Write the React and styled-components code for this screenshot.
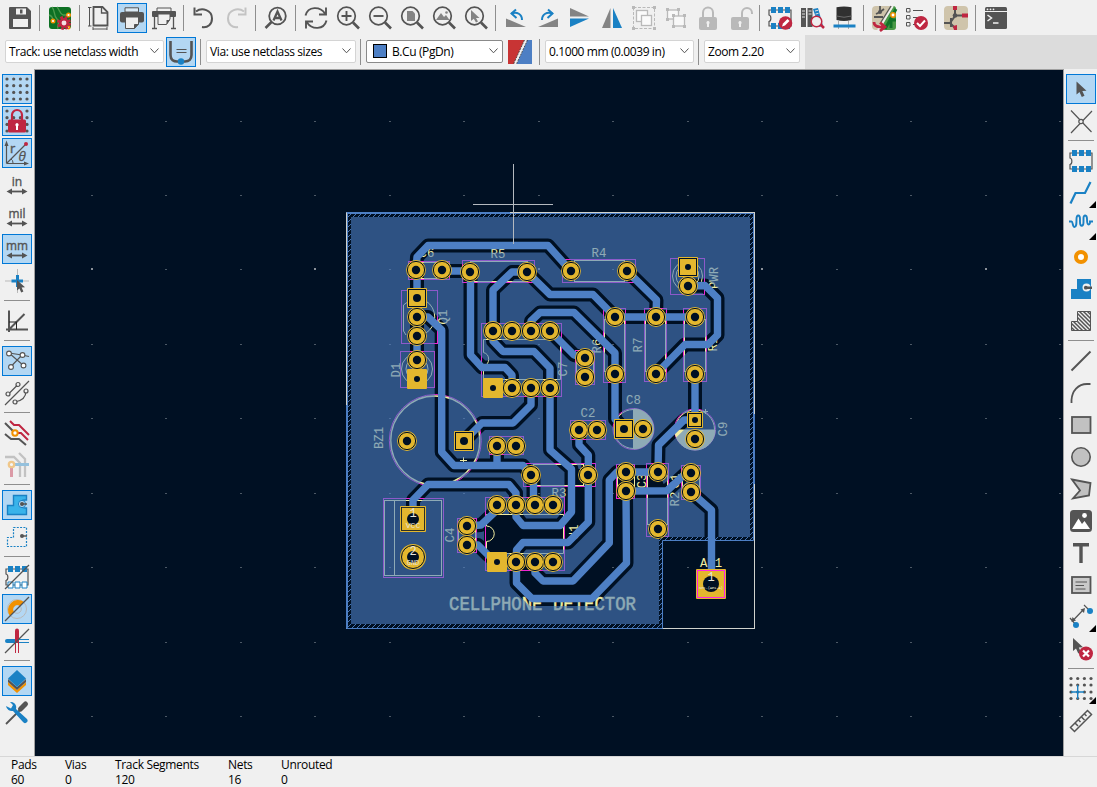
import React from "react";
import styled, { createGlobalStyle, css } from "styled-components";

const D = "#545454";
const B = "#1a81c4";
const R = "#bf2641";
const G = "#848484";
const L = "#b9b9b9";
const O = "#f29100";

const GlobalStyle = createGlobalStyle`
  * { box-sizing: border-box; }
  body { margin: 0; background: #f0f0f0; overflow: hidden; }
`;

const Window = styled.div`
  width: 1097px;
  height: 787px;
  display: flex;
  flex-direction: column;
  background: #f0f0f0;
  color: #000;
  font: 12px/15px "Open Sans", "Noto Sans", sans-serif;
`;

const TopToolbar = styled.div`
  height: 35px;
  flex: none;
  display: flex;
  gap: 2px;
  padding: 3px 0 0 5px;
`;

const OptionsRow = styled.div`
  height: 34px;
  flex: none;
  display: flex;
  background: #dcdcdc;
`;

const OptionsBar = styled.div`
  width: 805px;
  display: flex;
  align-items: flex-start;
  background: #f0f0f0;
  padding: 2px 0 0 5px;
`;

const Middle = styled.div`
  flex: 1;
  min-height: 0;
  display: flex;
`;

const SideToolbar = styled.div`
  width: ${(p) => (p.$right ? 33 : 34)}px;
  flex: none;
  display: flex;
  flex-direction: column;
  gap: 2px;
  padding: 5px 0 0 2px;
`;

const CanvasFrame = styled.div`
  flex: 1;
  border: 1px solid #a0a0a0;
  border-bottom: 0;
  background: #001023;
`;

const Separator = styled.i`
  flex: none;
  background: #8e8e8e;
  ${(p) =>
    p.$horizontal
      ? css`width: 26px; height: 1px; margin: 2px 0 3px 2px;`
      : css`width: 1px; height: 26px; margin: 2px 3px 0 2px;`}
`;

const OptionSeparator = styled.i`
  width: 1px;
  height: 26px;
  background: #8e8e8e;
  margin: 2px ${(p) => p.$after ?? 5}px 0 ${(p) => p.$before ?? 4}px;
`;

const Button = styled.button`
  position: relative;
  width: 30px;
  height: 30px;
  flex: none;
  margin-left: ${(p) => p.$indent ?? 0}px;
  padding: 0;
  display: flex;
  align-items: center;
  justify-content: center;
  border: 1px solid ${(p) => (p.$active ? "#0078d7" : "transparent")};
  background: ${(p) => (p.$active ? "#b3d7f3" : "transparent")};
  svg { width: 24px; height: 24px; overflow: visible; }
`;

const Corner = styled.span`
  position: absolute;
  right: -1px;
  bottom: -1px;
  border-style: solid;
  border-width: 0 0 7px 7px;
  border-color: transparent transparent #000;
`;

const Combo = styled.div`
  width: ${(p) => p.$w}px;
  height: 23px;
  margin-top: 3px;
  padding: 0 4px 1px 3px;
  display: flex;
  align-items: center;
  gap: 5px;
  background: #fff;
  border: 1px solid ${(p) => (p.$strong ? "#8a8a8a" : "#d4d4d4")};
  border-radius: 2px;
  letter-spacing: -0.4px;
  white-space: nowrap;
  svg { width: 9px; height: 6px; margin-left: auto; flex: none; }
`;

const LayerSwatch = styled.i`
  width: 14px;
  height: 14px;
  margin: 0 0 0 3px;
  flex: none;
  background: #4d7fc4;
  border: 1px solid #000;
`;

const LayerPair = styled.svg`
  width: 24px;
  height: 24px;
  margin: 3px 0 0 5px;
`;

const StatusBar = styled.div`
  height: 31px;
  flex: none;
  display: flex;
  border-top: 1px solid #d7d7d7;
  padding: 0 0 0 11px;
  letter-spacing: -0.32px;
`;

const Stat = styled.div`
  width: ${(p) => p.$w}px;
  line-height: 15px;
  white-space: nowrap;
`;

const lens = (
  <>
    <circle cx="10.5" cy="10" r="8.8" fill="none" stroke={D} strokeWidth="1.7" />
    <path d="M17 16.5 23 22.5" stroke={D} strokeWidth="2.6" />
  </>
);
const chip = (top = B, bottom = B) => (
  <>
    <path d="M1 4H23V20H1V15.5C3.5 15 3.5 9.5 1 9Z" fill="none" stroke={D} strokeWidth="1.2" />
    <path d="M3 1h5v6H3zM10 1h5v6h-5zM17 1h5v6h-5z" fill={top} />
    <path d="M3 17h5v6H3zM10 17h5v6h-5zM17 17h5v6h-5z" fill={bottom} stroke={bottom === B ? "none" : B} strokeWidth="1" />
  </>
);
const gridDots = (xs, ys, r = 1.6) =>
  xs.flatMap((x) => ys.map((y) => <circle key={`${x}-${y}`} cx={x} cy={y} r={r} fill={D} />));
const unitArrow = (
  <>
    <path d="M4 18.5H20" stroke={D} strokeWidth="1.8" />
    <path d="M1.500 18.500 7 15.500V21.500ZM22.500 18.500 17 15.500V21.500Z" fill={D} />
  </>
);
const unit = (label, w) => (
  <>
    <text x="12" y="13" textAnchor="middle" fontFamily="Open Sans" fontSize="13.500" fill={D} stroke={D} strokeWidth=".4" textLength={w} lengthAdjust="spacingAndGlyphs">{label}</text>
    {unitArrow}
  </>
);
const padlock = (open) => (
  <>
    <rect x="3" y="11" width="18" height="13" rx="2" fill={L} />
    <path d={open ? "M14 12V7a5 5 0 0 1 10 0v1" : "M7 12V6.500a5 5 0 0 1 10 0V12"} fill="none" stroke={L} strokeWidth="2" />
    <path d="M12 15a1.700 1.700 0 0 1 1 3v3h-2v-3a1.700 1.700 0 0 1 1-3" fill="#f0f0f0" />
  </>
);
const cursor = <path d="M0 0V13L3 10.500 5.300 15.500 8 14.300 5.800 9.500 10 9.200Z" fill={D} />;

const icons = {
  save: (
    <>
      <path d="M2 1H19L23 5V22a1 1 0 0 1-1 1H2a1 1 0 0 1-1-1V2a1 1 0 0 1 1-1" fill={D} />
      <path d="M8 2.500H18V8.500H8ZM5 13H20V21H5Z" fill="#f0f0f0" />
      <path d="M12 3.500h2.500v4H12z" fill={D} />
    </>
  ),
  setup: (
    <>
      <rect x="1" y="1" width="22" height="22" rx="3" fill="#0d7024" />
      <path d="M4 1C8 6 5 9 9 13S8 20 10 23M9 1c3 3 2 6 6 8h8M1 9c5 1 3 6 6 8" fill="none" stroke="#4c9a4d" strokeWidth="1.300" />
      <g fill="#fff" stroke={O} strokeWidth="1.400"><circle cx="5" cy="15" r="1.800" /><circle cx="20.500" cy="9" r="1.800" /><circle cx="20.500" cy="21.500" r="1.300" /></g>
      <circle cx="16" cy="17" r="5.600" fill="none" stroke={R} strokeWidth="2.800" strokeDasharray="2.700 1.700" />
      <circle cx="16" cy="17" r="3.700" fill="#f4dfe3" stroke={R} strokeWidth="2.500" />
    </>
  ),
  page: (
    <g fill="none" stroke={D}>
      <path d="M5.500 1H14.500L19.500 6V19.500H5.500Z" strokeWidth="1.800" />
      <path d="M13.500 1V7H19.500" strokeWidth="1.300" />
      <path d="M0 1.500H3.500M1.500 1.500V20M0 20H3.500M5 23H19M5 21V24M19 21V24" strokeWidth="1" />
    </g>
  ),
  print: (
    <>
      <path d="M5 1.800H18.500V6H5Z" fill="#dbeaf5" stroke={D} />
      <rect x="0" y="6" width="24" height="10.500" rx="2" fill={D} />
      <path d="M5.500 11H18.500V18L14.500 22.500H5.500Z" fill="#eee" stroke={D} />
      <path d="M14.500 22.500V18.500H18.500" fill={D} stroke={D} />
    </>
  ),
  plot: (
    <>
      <path d="M5 2H19V6H5Z" fill="#f0f0f0" stroke={D} />
      <rect y="5" width="24" height="6" rx="1" fill={D} />
      <path d="M6 8H18V13L14.500 18.500H6Z" fill="#f0f0f0" stroke={D} />
      <path d="M14.500 18.500V14H18" fill={D} />
      <path d="M2.500 11V22M21.500 11V22M0 22.500H5M19 22.500H24" stroke={D} strokeWidth="1.300" />
    </>
  ),
  undo: (
    <g fill="none" stroke={D} strokeWidth="2">
      <path d="M4 5.500C10 1 20 4 20 12.500 20 18 16 22 10 21" /><path d="M2.500 1.500V8.500H10" />
    </g>
  ),
  redo: (
    <g fill="none" stroke="#c3c3c3" strokeWidth="2">
      <path d="M20 5.500C14 1 4 4 4 12.500 4 18 8 22 14 21" /><path d="M21.500 1.500V8.500H14" />
    </g>
  ),
  find: (
    <>
      <circle cx="13.500" cy="10" r="8.300" fill="none" stroke={D} strokeWidth="1.800" />
      <path d="M7.500 16 1.500 22" stroke={D} strokeWidth="2.500" />
      <path d="M9.500 14.500 13.500 5.500 17.500 14.500M11 12H16" fill="none" stroke={D} strokeWidth="2.300" />
    </>
  ),
  refresh: (
    <g fill="none" stroke={D} strokeWidth="1.900">
      <path d="M1.500 9.500C4 0 16 0 21 7.500M22 1.500V8.500H15" />
      <path d="M22.500 14.500C20 24 8 24 3 16.500M2 22.500V15.500H9" />
    </g>
  ),
  zoomIn: <>{lens}<path d="M10.500 5V15M5.500 10H15.500" stroke={D} strokeWidth="1.900" /></>,
  zoomOut: <>{lens}<path d="M5.500 10H15.500" stroke={D} strokeWidth="1.900" /></>,
  zoomPage: <>{lens}<path d="M7 5H12.500L15 7.500V15H7Z" fill={G} /></>,
  zoomObjects: <>{lens}<path d="M4 14 9 7l3 4 2-2 3.500 5Z" fill={G} /><circle cx="14.500" cy="6.500" r="1.300" fill={G} /></>,
  zoomSelection: <>{lens}<path d="M7 4V15L9.800 12.800 12 16.500 14 15.500 12 12H15.500Z" fill={G} /></>,
  rotateCcw: (
    <>
      <path d="M2 12.500V21H22Z" fill={G} />
      <path d="M7.500 7.500C13 5.500 18 8 18 14" fill="none" stroke={B} strokeWidth="2" /><path d="M12 3.500 7.500 7.500 12.500 12" fill="none" stroke={B} strokeWidth="2" />
    </>
  ),
  rotateCw: (
    <>
      <path d="M22 12.500V21H2Z" fill={G} />
      <path d="M16.500 7.500C11 5.500 6 8 6 14" fill="none" stroke={B} strokeWidth="2" /><path d="M12 3.500 16.500 7.500 11.500 12" fill="none" stroke={B} strokeWidth="2" />
    </>
  ),
  flipV: <><path d="M2 2V10.500H21Z" fill={G} /><path d="M2 21V12.500H21Z" fill={B} /></>,
  mirror: <><path d="M10.500 2V22H2Z" fill={G} /><path d="M13 2V22H22Z" fill={B} /></>,
  group: (
    <g fill="none" stroke={L}>
      <rect x="1.500" y="1.500" width="21" height="21" strokeDasharray="3 1.500" />
      <rect x="4.500" y="4.500" width="11" height="11" fill="#fafafa" strokeWidth="1.300" /><rect x="9.500" y="9.500" width="10" height="10" fill="#fafafa" strokeWidth="1.300" />
      <path d="M0 0h3v3H0zM21 0h3v3h-3zM0 21h3v3H0zM21 21h3v3h-3z" fill={L} stroke="none" />
    </g>
  ),
  ungroup: (
    <g fill="#f8f8f8" stroke={L} strokeWidth="1.300">
      <rect x="3.500" y="4" width="11" height="9" /><rect x="9.500" y="10" width="11" height="10" />
      <path d="M2 2h3v3H2zM13 2h3v3h-3zM2 12h3v3H2zM8 8h3v3H8zM19 8h3v3h-3zM8 19h3v3H8zM19 19h3v3h-3z" fill={L} stroke="none" />
    </g>
  ),
  lock: padlock(false),
  unlock: padlock(true),
  footprintEdit: <>{chip()}<circle cx="17.500" cy="17" r="6.800" fill={R} /><path d="m14 20.500 1-3 4.500-4.500 2 2L17 19.500Z" fill="#fff" /></>,
  library: (
    <>
      <path d="M1 2h5v19H1zM7.500 2h5v19h-5z" fill={D} /><path d="m13 3 5-1 5 18-4 1Z" fill={B} />
      <path d="M2 5h3M2 8h3M2 11h3M8.500 5h3M8.500 8h3M15 5l3-.700M15.500 8l3-.700" stroke="#ddd" />
      <path d="m20 18 4 4" stroke={R} strokeWidth="2.500" /><circle cx="16.500" cy="15.500" r="5.300" fill="#eee" stroke={R} strokeWidth="1.500" />
    </>
  ),
  capacitor: (
    <>
      <path d="M6.500 15V23M16.500 15V23" stroke="#aaa" /><path d="M4.500 1.300Q12-.5 19.500 1.300V14Q12 16 4.500 14Z" fill="#303030" /><path d="M4.500 10Q12 12.500 19.500 10" fill="none" stroke="#6a6a6a" />
      <rect x="1.500" y="18.500" width="22" height="3" fill={B} />
    </>
  ),
  updatePcb: (
    <>
      <rect width="24" height="24" rx="4" fill="#cfc4ab" /><path d="M21 0a3 3 0 0 1 3 3V21a3 3 0 0 1-3 3H8Z" fill="#4a9a47" />
      <path d="M24 3 13 23M24 14H19V22" fill="none" stroke="#117328" strokeWidth="3" />
      <path d="M8 0V6L4 8M8 6l4-3M2 11H11" stroke={D} strokeWidth="1.800" fill="none" /><circle cx="8" cy="6" r="2" fill={D} />
      <path d="M21 0 6 24" stroke="#eee" strokeWidth="1.700" /><path d="M19 0 9 16" stroke={D} strokeWidth="1.200" />
      <circle cx="21" cy="9" r="2.200" fill="#fff" stroke={O} strokeWidth="1.500" />
      <path d="M2 16c0 5 5 5 9 5M8 16.500l5 4.500-5 4" fill="none" stroke={R} strokeWidth="2.700" />
    </>
  ),
  drc: (
    <>
      <g fill="none" stroke={D}><path d="M2.500 2.500h3.500v3.500H2.500zM2.500 9.500h3.500V13H2.500zM2.500 16.500h3.500V20H2.500z" /><path d="M9 4.500H19M9 11.500H14M9 18.500H12" strokeWidth="1.200" /></g>
      <circle cx="17" cy="17" r="7" fill={R} /><path d="m13 17 3 3 5-5.500" fill="none" stroke="#fff" strokeWidth="2" />
    </>
  ),
  schematic: (
    <>
      <rect width="24" height="24" rx="4" fill="#cfc4ab" /><path d="M0 17H6L11 10V3M11 9.500H19M6 17 11 22" fill="none" stroke={D} strokeWidth="2" />
      <circle cx="11" cy="9.500" r="2.300" fill={D} /><path d="M9 0h4v4H9zM18 7.500h6v4h-6zM9 20l4-1v5H10z" fill={R} /><path d="M7 12V21" stroke={D} strokeWidth="2" />
    </>
  ),
  console: (
    <>
      <rect x="1" y="1" width="22" height="22" rx="1.500" fill={D} /><path d="M1 5.500H23" stroke="#f0f0f0" />
      <g fill="#f0f0f0"><circle cx="3.500" cy="3.300" r=".9" /><circle cx="6.500" cy="3.300" r=".9" /><circle cx="9.500" cy="3.300" r=".9" /></g>
      <path d="m3.500 9 4 3-4 3M9 17H14.500" fill="none" stroke="#f0f0f0" strokeWidth="1.500" />
    </>
  ),
  trackWidth: (
    <>
      <path d="M1.500 1V15C1.500 20 5 21.500 8 21.500H16C20 21.500 22.500 19 22.500 15V1" fill="none" stroke={D} strokeWidth="2.600" />
      <path d="M7.500 9.500H17.500M7.500 12.500H17.500" stroke={D} strokeWidth="1.200" /><circle cx="12" cy="21.500" r="3.200" fill={B} />
    </>
  ),
  grid: gridDots([2, 8.700, 15.400, 22], [2, 8.700, 15.400, 22]),
  gridLock: (
    <>
      {gridDots([2, 22], [2, 8.700, 15.400, 22])}
      {gridDots([8.700, 15.400], [8.700])}
      <path d="M7 11V6a5 5 0 0 1 10 0V11" fill="none" stroke={R} strokeWidth="2.200" /><rect x="3" y="10.500" width="18" height="13" rx="1.500" fill={R} />
      <path d="M12 14a1.900 1.900 0 0 1 1 3.300V21H11V17.300A1.900 1.900 0 0 1 12 14" fill="#fff" />
    </>
  ),
  polar: (
    <>
      <path d="M1.500 22.500V3M1.500 22.500H21M1.500 22.500 20 4" fill="none" stroke={D} strokeWidth="1.200" /><path d="M1.500-.5 3.500 5h-4ZM24 22.500 19 20.500v4Z" fill={D} />
      <path d="M6 18q2 1 2 4" fill="none" stroke={D} /><circle cx="21" cy="3" r="2" fill={R} />
      <text x="5" y="11.500" fontSize="13" fontFamily="Open Sans" fill={D} stroke={D} strokeWidth=".4">r</text><text x="13.500" y="19.500" fontSize="13.500" fontStyle="italic" fontFamily="Open Sans" fill={D} stroke={D} strokeWidth=".3">θ</text>
    </>
  ),
  inch: unit("in", 10.5),
  mil: unit("mil", 17),
  mm: unit("mm", 22),
  cursorShape: (
    <>
      <path d="M12.500 0V24M0 12H24" stroke={L} /><path d="M12.500 6V18M6.500 12H18" stroke={B} strokeWidth="3" />
      <g transform="translate(12 11) scale(.8)">{cursor}</g>
    </>
  ),
  angle: <g fill="none" stroke={D}><path d="M4 1.500V23M1 20.500H23M4 20.500 19.500 5" strokeWidth="2" /><path d="M4 13H11.500V20.500" stroke="#222" /></g>,
  ratsnest: (
    <g fill="#fff" stroke={D} strokeWidth="1.100">
      <path d="M4 4 18.500 16.500M4 4 17 6 24 7.500M17 6 5.500 18" fill="none" /><circle cx="4" cy="4.500" r="2.400" /><circle cx="17.500" cy="6" r="2.400" /><circle cx="18.500" cy="16.500" r="2.400" /><circle cx="6" cy="18" r="2.400" />
    </g>
  ),
  curvedRatsnest: (
    <g fill="#f0f0f0" stroke={D} strokeWidth="1.200">
      <path d="M0 24 24 0M3.500 13 13 3.500M10 21Q21 19 21 10" fill="none" /><circle cx="3" cy="13" r="2" /><circle cx="13" cy="3.500" r="2" /><circle cx="10" cy="21" r="2" /><circle cx="21" cy="10" r="2" />
    </g>
  ),
  highlight: (
    <g fill="none" strokeWidth="2">
      <path d="M5 0 9 4H14L24 14M12 12H16L23 19" stroke={R} />
      <path d="M0 2 8 10M0 13 6 18H14L21 24" stroke={D} /><circle cx="10" cy="12" r="2.700" fill="#fff" stroke={O} />
    </g>
  ),
  localRatsnest: (
    <g fill="none" strokeWidth="2.300" opacity=".42">
      <path d="M0 4H9L15 10V24M14 0 20 6V24" stroke={G} /><path d="M9 11.500H24" stroke={B} strokeWidth="3" /><path d="M6.500 14V24" stroke={R} strokeWidth="3" /><circle cx="6.500" cy="11.500" r="2.700" fill="#fff" stroke={O} />
    </g>
  ),
  zoneFill: (
    <>
      <path d="M8.500 2.500H21.500V7C12 6 12 16 21.500 15V21.500H2.500V12.500H8.500Z" fill="#39b3ea" stroke={B} strokeWidth="1.400" />
      <circle cx="17" cy="11" r="3.600" fill="#b3d7f3" stroke={B} /><circle cx="17" cy="11" r="2" fill={D} /><path d="M17 11H22" stroke={D} strokeWidth="1.500" />
    </>
  ),
  zoneOutline: (
    <>
      <path d="M8.500 2.500H21.500V21.500H2.500V12.500H8.500Z" fill="none" stroke={B} strokeWidth="1.200" strokeDasharray="2 1.300" /><circle cx="17" cy="11" r="2" fill={D} /><path d="M17 11H22" stroke={D} strokeWidth="1.500" />
    </>
  ),
  padOutline: <>{chip(B, "#fff")}<path d="M0 24 24 0" stroke={D} strokeWidth="1.200" /></>,
  viaOutline: (
    <>
      <circle cx="12" cy="12" r="9.500" fill="none" stroke={L} /><circle cx="12" cy="12" r="4.300" fill="none" stroke={L} />
      <path d="M5 19A10 10 0 0 1 19 5L15 9A4.300 4.300 0 0 0 9 15Z" fill={O} /><path d="M0 24 24 0" stroke={D} strokeWidth="1.200" />
    </>
  ),
  trackOutline: (
    <>
      <path d="M2 12H12" stroke={B} strokeWidth="4" strokeLinecap="round" /><path d="M12 10.500H24M12 13.500H24" stroke={B} /><path d="M12 1.500V12" stroke={R} strokeWidth="4" strokeLinecap="round" /><path d="M10.500 12V24M13.500 12V24" stroke={R} />
      <path d="M0 24 24 0" stroke={D} strokeWidth="1.200" />
    </>
  ),
  layers: (
    <>
      <path d="m3 13 9 8 9-8v3l-9 8-9-8Z" fill={O} /><path d="m3 10 9 8 9-8v3l-9 8-9-8Z" fill={D} /><path d="m12 1 9 8.500-9 8.500-9-8.500Z" fill={B} />
    </>
  ),
  tools: (
    <>
      <path d="m1 23 14-14" stroke={D} strokeWidth="1.800" /><path d="m15.500 8 5-5" stroke={D} strokeWidth="5" strokeLinecap="round" />
      <path d="M1 5A6 6 0 0 0 8 10L18 21a2.500 2.500 0 0 0 4-3L11 8A5.500 5.500 0 0 0 5 1L8 4 6 7.500Z" fill={B} />
    </>
  ),
  select: <g transform="translate(7.500 4.500)">{cursor}</g>,
  netTool: <g fill="#f0f0f0" stroke={D} strokeWidth="1.200"><path d="M2 1.500 22.500 23M23 2 2 24" /><circle cx="12" cy="12.500" r="2.200" /></g>,
  footprint: chip(),
  route: <path d="M1.500 22.500 6.500 12H16L21.500 1" fill="none" stroke={B} strokeWidth="2.200" />,
  tune: <path d="M0 8.500H2.500C4 8.500 3.500 14 5.500 14S7.500 11 7.500 6 11 1.500 11 6V9C11 14 14.500 14 14.500 9V5C14.500 1.500 18 1.500 18 6 18 14 21.500 12 21 8.500H24" fill="none" stroke={B} strokeWidth="1.900" />,
  via: <circle cx="12" cy="12" r="5" fill="#fff" stroke={O} strokeWidth="4" />,
  zone: (
    <>
      <path d="M8 2H22V22H2V12H8Z" fill={B} /><circle cx="17.500" cy="10.500" r="4" fill="#f0f0f0" /><path d="M16 9.500H23V12H16Z" fill={D} /><circle cx="16.800" cy="10.700" r="1.900" fill={D} />
    </>
  ),
  ruleArea: (
    <>
      <defs><pattern id="areaHatch" width="4" height="4" patternUnits="userSpaceOnUse"><path d="M-1-1 5 5M-1 3 1 5M3-1 5 1" stroke={D} strokeWidth="1.500" /></pattern></defs>
      <path d="M8.500 2.500H21.500V21.500H2.500V12.500H8.500Z" fill="url(#areaHatch)" stroke={D} />
    </>
  ),
  line: <path d="M2.500 21.500 21.500 2.500" stroke={D} strokeWidth="2" />,
  arc: <path d="M2.500 22V19C3 10 9 3 18 3h3.500" fill="none" stroke={D} strokeWidth="1.800" />,
  rect: <rect x="3" y="4" width="18.500" height="16" fill="#c1c1c1" stroke={D} strokeWidth="1.800" />,
  circle: <circle cx="12" cy="12" r="9.200" fill="#c1c1c1" stroke={D} strokeWidth="1.600" />,
  polygon: <path d="M3 2.500 21.500 6 20 18.500 4 21.500 11 13.500Z" fill="#c1c1c1" stroke={D} strokeWidth="1.800" />,
  image: (
    <>
      <rect x="1" y="1" width="22" height="22" rx="3.500" fill={D} /><path d="M3 20 9.500 9.500 13 15l2.500-3L21 20Z" fill="#fff" /><circle cx="15.500" cy="6.500" r="2.400" fill="#fff" />
    </>
  ),
  text: <path d="M4 2H20V5.500H13.700V22H10.300V5.500H4Z" fill={D} />,
  textBox: <><rect x="3" y="4" width="18.500" height="16" fill="#c9c9c9" stroke={D} strokeWidth="1.800" /><path d="M6.500 9H18M6.500 12.500H15M6.500 16H16.500" stroke={D} /></>,
  dimension: (
    <>
      <path d="M4 15.500 14.500 4.500M1 13 7 20M15 0 22 7" stroke={D} strokeWidth="1.200" /><path d="m2.500 17 1-5 3.500 3.500ZM16 3l-1 5-3.500-3.500Z" fill={D} /><circle cx="7" cy="20" r="3" fill={B} /><circle cx="21" cy="6" r="3" fill={B} />
    </>
  ),
  del: (
    <>
      <g transform="translate(4 1)">{cursor}</g><circle cx="17" cy="16.500" r="7" fill={R} /><path d="m14 13.500 6 6M20 13.500l-6 6" stroke="#fff" strokeWidth="2.200" />
    </>
  ),
  origin: <>{gridDots([2, 8.700, 15.400, 22], [1.500, 8, 15, 21.500])}<path d="M2 15H15M8.700 8V22" stroke={B} strokeWidth="1.400" /></>,
  measure: (
    <g fill="none" stroke={D} strokeWidth="1.500">
      <path d="M18.500 1.500 22.500 5.500 5.500 22.500 1.500 18.500Z" /><path d="m15.500 5 2 2M12.500 8l3 3M9.500 11l2 2M6 14l3 3" />
    </g>
  ),
};

const topItems = [
  "save", "|", "setup", "|", "page", "print*", "plot", "|", "undo", "redo", "|", "find", "|", "refresh", "zoomIn", "zoomOut", "zoomPage", "zoomObjects", "zoomSelection", "|",
  "rotateCcw", "rotateCw", "flipV", "mirror", "group", "ungroup", "lock", "unlock", "|", "footprintEdit", "library", "capacitor", "|", "updatePcb", "drc", "|", "schematic", "|", "console",
];
const leftItems = [
  "grid*", "gridLock*", "polar*", "inch", "mil", "mm*", "cursorShape", "|", "angle", "|", "ratsnest*", "curvedRatsnest", "|", "highlight", "localRatsnest", "|",
  "zoneFill*", "zoneOutline", "|", "padOutline", "viaOutline*", "trackOutline", "|", "layers*", "tools",
];
const rightItems = [
  "select*", "netTool", "|", "footprint", "route+", "tune+", "via", "zone", "ruleArea", "|", "line", "arc", "rect", "circle", "polygon", "image", "text", "textBox", "dimension+", "del", "|", "origin+", "measure",
];

function Tools({ items, horizontal }) {
  return items.map((item, i) => {
    if (item === "|") return <Separator key={i} $horizontal={horizontal} />;
    const name = item.replace(/[*+]/g, "");
    return (
      <Button key={i} $active={item.endsWith("*")} aria-label={name}>
        <svg viewBox="0 0 24 24">{icons[name]}</svg>
        {item.endsWith("+") && <Corner />}
      </Button>
    );
  });
}

const Chevron = () => <svg viewBox="0 0 9 6"><path d="M.5.500 4.500 4.800 8.500.500" fill="none" stroke="#555" /></svg>;

const tracks = [
  "416,270 417,257 428,245.500 548,245.500 571,271",
  "417,270 417,298",
  "417,317 417,360",
  "442,271 470,271",
  "470.500,272 470.500,355 482,367.500 505,367.500 512,375 512,388",
  "527,272 512,272 493,290 493,341 503,351.500 534,351.500 550,368 550,450 571.500,469 571.500,512 560,525.500 523,525.500 516,517 516,505",
  "527,272 550,294.500 593,294.500 615,317",
  "531,331 531,321 540,312.500 574,312.500 615,353 615,419 624,429",
  "550,331 574,355 585,358",
  "417,317 428,317 441.700,330 441.700,452 454,465.500 523,465.500 531,475",
  "627,271 656.500,300 656,317",
  "615,317 695,317",
  "688,286 705,285.500 717.500,298 717.500,335 708,344.500 685,344.500 656,374",
  "695,374 695,420",
  "695,420 684,420 658.500,445 658,472",
  "531,388 531,405 513,423 482,423 464,441",
  "579,430 579,445 588.300,455 588.300,522 568,542.500 523,542.500 516.500,550 516.500,583 532,598.500 592,598.500 626.500,563 626,491",
  "626,472 617,472 609.300,480 609.300,543 573,581 543,581 535,573 535,562",
  "626,472 658,472",
  "626,491 667,490.700 686,473 691,473",
  "691,492 711.500,510 711.500,584",
  "413,519 413,500 428,484.500 509,484.500 516,493 516,505",
  "497,446 497,465",
  "533.500,475 533.500,505",
  "467,526 481,525 497,510",
  "467,545 478,545 488,555 497,562",
];

const islands = [
  "571,469 588,469 588,522 568,542 516,550 516,553 484,553 484,514 516,514 523,525 560,525 571,512",
  "535,562 543,581 573,581 609,543 609,480 617,472 626,472 626,563 597,606 530,606 516,583 516,562",
  "626,472 658,472 667,491 626,491",
];

const roundPads = [
  [416, 270], [442, 270], [470, 272], [527, 272], [417, 317], [417, 336], [417, 360], [493, 331], [512, 331], [531, 331], [550, 331],
  [512, 388], [531, 388], [550, 388], [585, 358], [585, 377], [571, 271], [627, 271], [615, 317], [615, 374], [656, 317], [656, 374],
  [695, 317], [695, 374], [688, 286], [643, 429], [579, 430], [597, 430], [695, 439], [407, 441], [497, 446], [516, 446], [531, 475],
  [588, 475], [626, 472], [626, 491], [658, 472], [658, 529], [691, 473], [691, 492], [467, 526], [467, 545], [497, 505], [516, 505],
  [535, 505], [553, 505], [516, 562], [535, 562], [553, 562],
];
// x, y, side, drill radius, clearance line drawn inside the pad
const squarePads = [
  [417, 298, 19, 4, true], [417, 379, 19, 3], [493, 388, 19, 3], [688, 267, 19, 3, true], [624, 429, 19, 4, true], [695, 420, 15, 3, true],
  [464, 441, 19, 4, true], [497, 562, 19, 3], [413, 519, 25, 6], [711, 584, 29, 8],
];

const courtyards = [
  [462.5, 260.5, 72, 22], [408.5, 261.5, 41, 18], [401.5, 290.5, 36, 53], [400.5, 351.5, 34, 36], [481.5, 323.5, 80, 73], [562.5, 259.5, 73, 23],
  [670.5, 258.5, 34, 36], [603.5, 308.5, 22, 74], [644.5, 308.5, 22, 73], [683.5, 308.5, 23, 73], [575.5, 350.5, 19, 34], [570.5, 420.5, 35, 19],
  [489.5, 436.5, 34, 18], [523.5, 463.5, 72, 23], [383.5, 498.5, 60, 79], [457.5, 518.5, 19, 34], [485.5, 497.5, 79, 73], [616.5, 464.5, 18, 34],
  [646.5, 463.5, 22, 73], [681.5, 465.5, 19, 34],
];
const silkRects = [
  [470.5, 261.5, 57, 20], [421.5, 262.5, 15, 16], [574.5, 260.5, 50, 21], [604.5, 319.5, 20, 52], [645.5, 319.5, 20, 52], [684.5, 319.5, 21, 52],
  [576.5, 361.5, 17, 12], [533.5, 464.5, 50, 21], [384.5, 500.5, 57, 75], [647.5, 475.5, 20, 49], [458.5, 529.5, 17, 12], [617.5, 475.5, 17, 12], [682.5, 475.5, 17, 12],
];
const labels = [
  ["C6", 427, 253, 0], ["R5", 498, 253.5, 0], ["R4", 599, 253, 0], ["C8", 633.5, 400, 0], ["C2", 588, 413, 0], ["R3", 559, 492.5, 0], ["AE1", 711, 562.5, 0],
  ["PWR", 714, 278, 1], ["Q1", 443, 317, 1], ["D1", 396, 370, 1], ["C7", 563, 369, 1], ["R6", 597, 346, 1], ["R7", 638, 345, 1], ["R1", 713, 344, 1],
  ["C9", 723, 429, 1], ["BZ1", 379, 438, 1], ["C4", 450, 535, 1], ["U1", 574, 532, 1], ["C3", 642, 481, 1], ["R2", 675, 499, 1], ["C1", 675, 481, 1],
];

const gridPoints = [];
for (let i = 0; i < 14; i++) for (let j = 0; j < 9; j++) gridPoints.push([92 + i * 74.46, 120.5 + j * 74.44, i % 3 === 0 && j === 2]);

function Board() {
  const lineProps = { fill: "none", stroke: "#001023" };
  return (
    <svg width="1028" height="686" viewBox="35 70 1028 686" display="block">
      <defs>
        <mask id="clearance" maskUnits="userSpaceOnUse" x="340" y="200" width="420" height="440">
          <path d="M351 217H750V537H659V624H351Z" fill="#fff" />
          <g fill="none" stroke="#000" strokeWidth="14" strokeLinejoin="round" strokeLinecap="round">
            {tracks.map((t) => <polyline key={t} points={t} />)}
          </g>
          {islands.map((p) => <polygon key={p} points={p} />)}
        </mask>
        <pattern id="hatch" width="5" height="5" patternUnits="userSpaceOnUse">
          <path d="M-1 6 6-1M-1 1 1-1M4 6 6 4" stroke="#4d7fc4" strokeWidth=".9" />
        </pattern>
      </defs>
      {gridPoints.map(([x, y, big]) => (
        <rect key={`${x}-${y}`} x={Math.round(x) - 1} y={Math.round(y) - (big ? 1 : 0)} width="2" height={big ? 2 : 1} fill={big ? "#8b9199" : "#4c5865"} />
      ))}
      <g fill="none" stroke="#ff26e2" strokeWidth="1" opacity=".93">
        {courtyards.map(([x, y, w, h]) => <rect key={`${x}-${y}`} x={x} y={y} width={w} height={h} />)}
        <circle cx="435.300" cy="440.500" r="46" /><circle cx="633.500" cy="429" r="20.500" /><circle cx="695" cy="429.500" r="20.500" />
      </g>
      <g fill="none" stroke="#f2eda1" strokeWidth="1">
        {silkRects.map(([x, y, w, h]) => <rect key={`${x}-${y}`} x={x} y={y} width={w} height={h} />)}
        <path d="M394.500 500V576M407 302.500 403.500 305V331L406 335M426 301A19 19 0 0 1 426 333" />
        <circle cx="417" cy="369" r="15.500" /><circle cx="417" cy="369" r="11" /><circle cx="687.500" cy="276" r="15" /><circle cx="687.500" cy="276" r="11.500" />
        <path d="M483.500 379.500V370M483.500 352.500V339.500H560.500V379.500H483.500M483.500 352.500A7 7 0 0 1 483.500 366" />
        <path d="M486.500 541.500V553.500H563.500V514.500H486.500V526A7.700 7.700 0 0 1 486.500 541.500" />
        <circle cx="435.300" cy="440.500" r="44.500" strokeWidth="1.300" /><circle cx="633.500" cy="429" r="19.500" /><circle cx="695" cy="429.500" r="19.500" />
        <path d="M633.500 409A20 20 0 0 1 633.500 449ZM675 430A20 20 0 0 0 715 430Z" fill="#f2eda1" />
        <path d="M460 460.500H467M463.500 457V464M703 411.500H708M705.500 409V414" />
      </g>
      <g fill="#f2eda1" fontFamily="Liberation Mono" fontSize="13.500" textAnchor="middle">
        {labels.map(([t, x, y, v]) => (
          <text key={t} transform={`translate(${x} ${y})${v ? " rotate(-90)" : ""}`} y="4.300" textLength={t.length * 7.4} lengthAdjust="spacingAndGlyphs">{t}</text>
        ))}
        <text x="542.500" y="610" fontSize="20" textLength="187" lengthAdjust="spacingAndGlyphs" stroke="#f2eda1" strokeWidth=".5">CELLPHONE DETECTOR</text>
      </g>
      <rect x="346.500" y="212.500" width="408" height="416" fill="none" stroke="#d0d2cd" />
      <rect x="340" y="205" width="420" height="430" fill="#4d7fc4" opacity=".6" mask="url(#clearance)" />
      <g fill="url(#hatch)">
        <path d="M347 213h4v415h-4zM351 213h403v4H351zM750 217h4v324h-4zM351 624h312v4H351zM659 541h4v83h-4zM659 537h91v4h-91z" />
      </g>
      <path d="M510 212.500H346.500M347.500 213V627.500M346.500 405V628.500H662.500V540.500H753.500V213.500H348M754.500 414V484" fill="none" stroke="#4d7fc4" />
      <g fill="none" stroke="#4d7fc4" strokeWidth="7.400" strokeLinejoin="round" strokeLinecap="round">
        {tracks.map((t) => <polyline key={t} points={t} />)}
      </g>
      {roundPads.map(([x, y]) => (
        <g key={`${x}-${y}`} transform={`translate(${x} ${y})`}>
          <circle r="9.900" fill="#e3b72e" /><circle r="8.600" {...lineProps} /><circle r="4.200" fill="#001023" />
        </g>
      ))}
      {squarePads.map(([x, y, s, hole, lined]) => (
        <g key={`${x}-${y}`} transform={`translate(${x} ${y})`}>
          <rect x={-s / 2 - 0.5} y={-s / 2 - 0.5} width={s + 1} height={s + 1} rx="1" fill="#e3b72e" />
          {lined && <rect x={-s / 2 + 1} y={-s / 2 + 1} width={s - 2} height={s - 2} {...lineProps} />}
          {!lined && s > 20 && <rect x={-s / 2 + 1} y={-s / 2 + 1} width={s - 2} height={s - 2} {...lineProps} strokeWidth=".8" />}
          <circle r={hole} fill="#001023" />
        </g>
      ))}
      <g transform="translate(413 557)"><circle r="13" fill="#e3b72e" /><circle r="11.500" {...lineProps} /><circle r="6" fill="#001023" /></g>
      <rect x="697.500" y="570.500" width="27" height="27" fill="none" stroke="#ff26e2" />
      <g fill="#e8e6dc" fontFamily="Liberation Mono" fontSize="12" textAnchor="middle">
        <text x="413" y="517">1</text><text x="413" y="555">2</text><text x="711" y="581">1</text>
        <text x="413" y="528" fontSize="8">VCC</text><text x="413" y="565" fontSize="7">GND</text><text x="711" y="589" fontSize="4" textLength="24">Net-(AE1-A)</text>
      </g>
      <path d="M473 204.500H553M513.500 164V244" stroke="#b4b9bf" />
    </svg>
  );
}

const stats = [["Pads", "60", 54], ["Vias", "0", 50], ["Track Segments", "120", 113], ["Nets", "16", 53], ["Unrouted", "0", 80]];

export default function App() {
  return (
    <Window>
      <GlobalStyle />
      <TopToolbar><Tools items={topItems} /></TopToolbar>
      <OptionsRow>
        <OptionsBar>
          <Combo $w={159}>Track: use netclass width<Chevron /></Combo>
          <Button $active $indent={2} aria-label="auto track width"><svg viewBox="0 0 24 24">{icons.trackWidth}</svg></Button>
          <OptionSeparator />
          <Combo $w={150}>Via: use netclass sizes<Chevron /></Combo>
          <OptionSeparator />
          <Combo $w={137} $strong><LayerSwatch />B.Cu (PgDn)<Chevron /></Combo>
          <LayerPair viewBox="0 0 24 24">
            <path d="M0 0H18L7 24H0Z" fill="#c83434" /><path d="M18 0H24V24H7Z" fill="#4d7fc4" />
            <path d="M18 0 7 24" stroke="#f0f0f0" strokeWidth="3" /><path d="M16.500 0 5.500 24M19.500 0 8.500 24" stroke="#333" strokeWidth=".8" strokeDasharray="2 1" />
          </LayerPair>
          <OptionSeparator $before={7} />
          <Combo $w={149}>0.1000 mm (0.0039 in)<Chevron /></Combo>
          <OptionSeparator />
          <Combo $w={96}>Zoom 2.20<Chevron /></Combo>
        </OptionsBar>
      </OptionsRow>
      <Middle>
        <SideToolbar><Tools items={leftItems} horizontal /></SideToolbar>
        <CanvasFrame><Board /></CanvasFrame>
        <SideToolbar $right><Tools items={rightItems} horizontal /></SideToolbar>
      </Middle>
      <StatusBar>
        {stats.map(([name, value, w]) => <Stat key={name} $w={w}>{name}<br />{value}</Stat>)}
      </StatusBar>
    </Window>
  );
}
